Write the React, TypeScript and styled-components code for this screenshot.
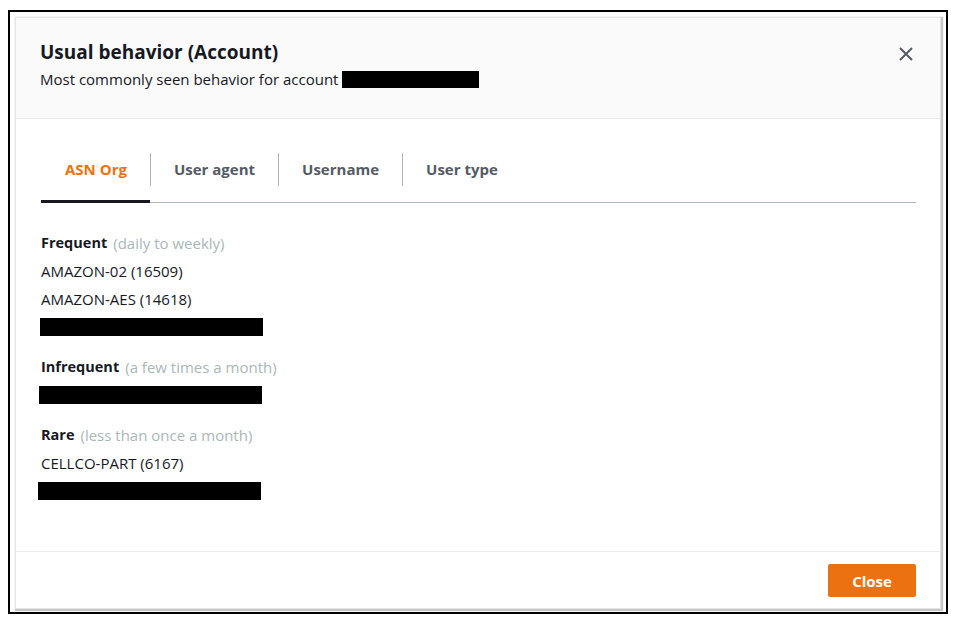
import React, { useState } from "react";
import styled, { createGlobalStyle } from "styled-components";

const Global = createGlobalStyle`
  html, body { margin: 0; padding: 0; background: #ffffff; }
  body { font-family: "Open Sans", "Noto Sans", Arial, sans-serif; color: #16191f; }
  * { box-sizing: border-box; }
`;

const Frame = styled.div`
  margin: 10px 0 0 8px;
  width: 940px;
  height: 604px;
  border: 2px solid #000;
  padding: 5px 5px 3px 5px;
  background: #fefefe;
`;

const Modal = styled.div`
  width: 926px;
  height: 592px;
  background: #fff;
  border: 1px solid #e4e6e6;
  box-shadow: 1px 1px 1px 1px rgba(0, 0, 0, 0.22);
  display: flex;
  flex-direction: column;
`;

const Header = styled.div`
  background: #fafafa;
  border-bottom: 1px solid #eaeded;
  height: 101px;
  padding: 21px 24px 0 24px;
  display: flex;
  justify-content: space-between;
  align-items: flex-start;
`;

const Title = styled.h2`
  margin: 0;
  font-size: 19px;
  line-height: 26px;
  font-weight: 700;
  color: #16191f;
`;

const Subtitle = styled.div`
  margin-top: 4px;
  font-size: 15px;
  line-height: 20px;
  color: #16191f;
  display: flex;
  align-items: center;
`;

const Redact = styled.span<{ $w: number; $h?: number; $dx?: number }>`
  display: inline-block;
  width: ${(p) => p.$w}px;
  height: ${(p) => p.$h ?? 18}px;
  background: #000;
  margin-left: ${(p) => p.$dx ?? 0}px;
`;

const CloseIcon = styled.button`
  border: 0;
  background: transparent;
  padding: 0;
  margin-top: 5px;
  margin-right: 0;
  width: 20px;
  height: 20px;
  display: flex;
  align-items: center;
  justify-content: center;
  cursor: pointer;
`;

const Body = styled.div`
  flex: 1;
  padding: 34px 24px 0 24px;
`;

const TabList = styled.div`
  display: flex;
  border-bottom: 1px solid #aab7b8;
  margin-left: 1px;
`;

const Tab = styled.div<{ $active?: boolean; $first?: boolean }>`
  position: relative;
  height: 49px;
  padding: 0 23px 0 24px;
  font-size: 15px;
  font-weight: 700;
  line-height: 33px;
  color: ${(p) => (p.$active ? "#ec7211" : "#545b64")};
  cursor: pointer;
  &::before {
    content: "";
    display: ${(p) => (p.$first ? "none" : "block")};
    position: absolute;
    left: 0;
    top: 0;
    height: 33px;
    width: 1px;
    background: #aab7b8;
  }
  &::after {
    content: "";
    display: ${(p) => (p.$active ? "block" : "none")};
    position: absolute;
    left: 0;
    right: 0;
    bottom: -1px;
    height: 3px;
    background: #16191f;
  }
`;

const Content = styled.div`
  padding-top: 26px;
  padding-left: 1px;
  display: flex;
  flex-direction: column;
  gap: 12px;
`;

const Section = styled.div`
  display: flex;
  flex-direction: column;
`;

const Row = styled.div`
  height: 28px;
  line-height: 28px;
  font-size: 15px;
  display: flex;
  align-items: center;
`;

const Label = styled.span`
  font-size: 14.5px;
  font-weight: 700;
  color: #16191f;
`;

const Hint = styled.span`
  color: #aab7b8;
  margin-left: 6px;
`;

const Footer = styled.div`
  border-top: 1px solid #eaeded;
  padding: 12px 24px 11px 24px;
  display: flex;
  justify-content: flex-end;
`;

const PrimaryButton = styled.button`
  height: 33px;
  width: 88px;
  border: 1px solid #ec7211;
  border-radius: 2px;
  background: #ec7211;
  color: #fff;
  font-family: "Open Sans", "Noto Sans", Arial, sans-serif;
  font-size: 15px;
  font-weight: 700;
  cursor: pointer;
`;

const sections = [
  { label: "Frequent", hint: "(daily to weekly)", items: ["AMAZON-02 (16509)", "AMAZON-AES (14618)"], redact: { w: 223, dx: -1 } },
  { label: "Infrequent", hint: "(a few times a month)", items: [], redact: { w: 223, dx: -2 } },
  { label: "Rare", hint: "(less than once a month)", items: ["CELLCO-PART (6167)"], redact: { w: 223, dx: -3 } },
];

const tabs = ["ASN Org", "User agent", "Username", "User type"];

export default function App() {
  const [active, setActive] = useState(0);
  return (
    <>
      <Global />
      <Frame>
        <Modal>
          <Header>
            <div>
              <Title>Usual behavior (Account)</Title>
              <Subtitle>
                Most commonly seen behavior for account
                <Redact $w={137} $h={17} $dx={4} />
              </Subtitle>
            </div>
            <CloseIcon aria-label="Close">
              <svg width="16" height="16" viewBox="0 0 16 16">
                <path d="M2 2 L14 14 M14 2 L2 14" stroke="#545b64" strokeWidth="2" fill="none" />
              </svg>
            </CloseIcon>
          </Header>
          <Body>
            <TabList>
              {tabs.map((t, i) => (
                <Tab key={t} $active={i === active} $first={i === 0} onClick={() => setActive(i)}>
                  {t}
                </Tab>
              ))}
            </TabList>
            <Content>
              {sections.map((s) => (
                <Section key={s.label}>
                  <Row>
                    <Label>{s.label}</Label>
                    <Hint>{s.hint}</Hint>
                  </Row>
                  {s.items.map((it) => (
                    <Row key={it}>{it}</Row>
                  ))}
                  <Row>
                    <Redact $w={s.redact.w} $dx={s.redact.dx} />
                  </Row>
                </Section>
              ))}
            </Content>
          </Body>
          <Footer>
            <PrimaryButton>Close</PrimaryButton>
          </Footer>
        </Modal>
      </Frame>
    </>
  );
}
